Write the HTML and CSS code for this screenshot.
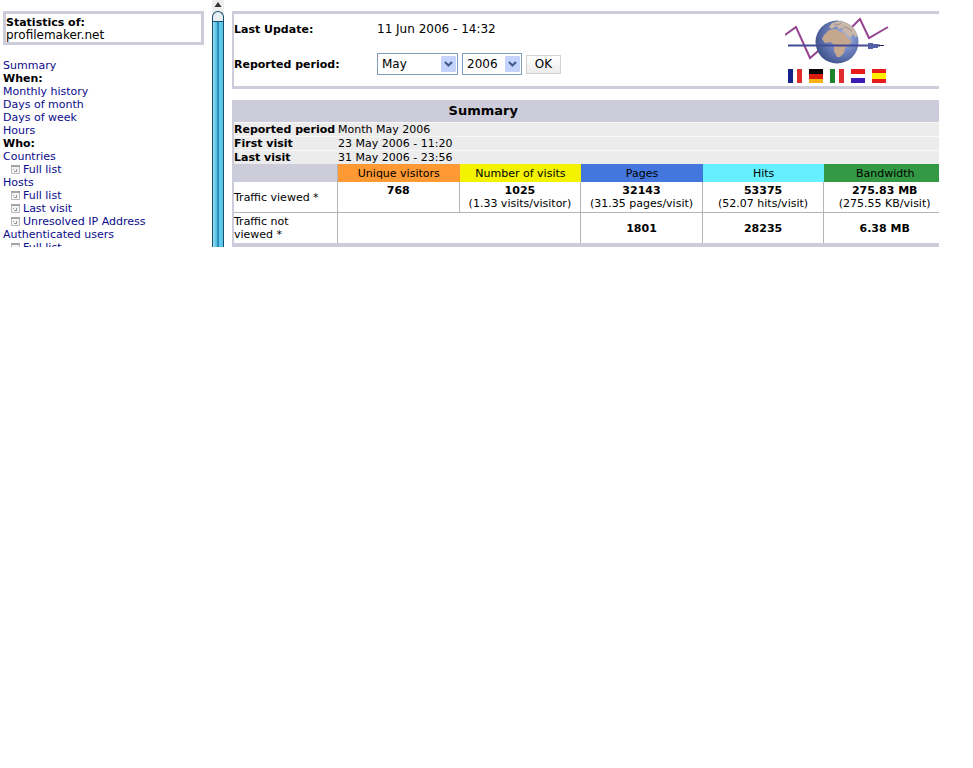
FILE: index.html
```html
<!doctype html>
<html lang="en">
  <head>
    <meta charset="UTF-8" />
    <meta name="viewport" content="width=device-width, initial-scale=1.0" />
    <title>Statistics of profilemaker.net</title>
    <link rel="stylesheet" href="styles.css">
  </head>
  <body>
    <svg class="defs" width="0" height="0" aria-hidden="true">
      <symbol id="page-icon" viewBox="0 0 9 9">
        <path d="M.5 1.500h8v7h-8z" fill="#f4f4f4" stroke="#bbb" />
        <path d="M0 1h9" stroke="#a5a5a5" stroke-width="2" />
        <path d="M2 4.500h1M3 6.500h3M5.500 4v3" fill="none" stroke="#999" />
      </symbol>
      <symbol id="arrow" viewBox="0 0 15 16">
        <rect width="15" height="16" rx="1" fill="#c3d3fb" />
        <path d="M4 6l3.500 3.500L11 6" fill="none" stroke="#435f91" stroke-width="2.200" />
      </symbol>
    </svg>

    <div class="frames">
      <nav class="sidebar">
        <div class="site-box">
          <b>Statistics of:</b>
          <span class="site-name">profilemaker.net</span>
        </div>
        <ul class="menu">
          <li><a href="#summary">Summary</a></li>
          <li><b>When:</b></li>
          <li><a href="#month">Monthly history</a></li>
          <li><a href="#daysofmonth">Days of month</a></li>
          <li><a href="#daysofweek">Days of week</a></li>
          <li><a href="#hours">Hours</a></li>
          <li><b>Who:</b></li>
          <li><a href="#countries">Countries</a></li>
          <li class="sub"><svg><use href="#page-icon" /></svg><a href="#allcountries">Full list</a></li>
          <li><a href="#hosts">Hosts</a></li>
          <li class="sub"><svg><use href="#page-icon" /></svg><a href="#allhosts">Full list</a></li>
          <li class="sub"><svg><use href="#page-icon" /></svg><a href="#lasthosts">Last visit</a></li>
          <li class="sub"><svg><use href="#page-icon" /></svg><a href="#unknownip">Unresolved IP Address</a></li>
          <li><a href="#logins">Authenticated users</a></li>
          <li class="sub"><svg><use href="#page-icon" /></svg><a href="#alllogins">Full list</a></li>
        </ul>
      </nav>

      <div class="scrollbar">
        <svg class="scroll-up" viewBox="0 0 12 11"><path d="M6 2l3.500 5h-7z" fill="#333" /></svg>
        <div class="thumb"></div>
      </div>

      <main class="main">
        <form class="period-box">
          <div class="fields">
            <b>Last Update:</b>
            <span class="update">11 Jun 2006 - 14:32</span>
            <b>Reported period:</b>
            <div class="controls">
              <span class="select month">
                <select aria-label="Month"><option>May</option></select>
                <svg><use href="#arrow" /></svg>
              </span>
              <span class="select year">
                <select aria-label="Year"><option>2006</option></select>
                <svg><use href="#arrow" /></svg>
              </span>
              <button type="button">OK</button>
            </div>
          </div>
          <div class="brand">
            <svg class="logo" viewBox="0 0 104 48">
              <defs>
                <radialGradient id="sea" cx=".65" cy=".4" r=".65">
                  <stop offset="0" stop-color="#b4c2e4" />
                  <stop offset=".5" stop-color="#6f84c0" />
                  <stop offset="1" stop-color="#43558f" />
                </radialGradient>
                <clipPath id="globe"><circle cx="52" cy="25" r="21.500" /></clipPath>
              </defs>
              <path d="M0 18l11-8 14 31 14-12M63 14l12-12 9 19 19-11" fill="none" stroke="#95448f" stroke-width="2" />
              <circle cx="52" cy="25" r="21.500" fill="url(#sea)" />
              <g clip-path="url(#globe)">
                <path d="M39 18l5-5 7-1 4 3 5 1 3 6 4 1-3 5-4 3-1 5-4 4h-3l-3-6v-6l-3-3-6 1-3-4z" fill="#c4a78d" />
                <path d="M44 10l3-4 7-2 8 1 7 6 5 8-4 1-2-3-3 4-5-6-3-1 2-3-5 1-3-3-4 3z" fill="#c9b8a8" />
                <path d="M49 7l4 1 3-2M59 10l4 1 4 3" fill="none" stroke="#988f98" />
              </g>
              <path d="M3 28.500h92" stroke="#454c96" stroke-width="2" />
              <path d="M83 26h5v1h5v4h-5v1h-5z" fill="#5560a8" />
              <path d="M93 28.500h6" stroke="#222a60" />
            </svg>
            <div class="flags">
              <a class="flag fr" href="#fr" aria-label="French"></a>
              <a class="flag de" href="#de" aria-label="German"></a>
              <a class="flag it" href="#it" aria-label="Italian"></a>
              <a class="flag nl" href="#nl" aria-label="Dutch"></a>
              <a class="flag es" href="#es" aria-label="Spanish"></a>
            </div>
          </div>
        </form>

        <section class="summary" id="summary">
          <h2>Summary</h2>
          <table>
            <colgroup>
              <col class="label-col" />
              <col span="5" />
            </colgroup>
            <tbody class="info">
              <tr><th>Reported period</th><td colspan="5">Month May 2006</td></tr>
              <tr><th>First visit</th><td colspan="5">23 May 2006 - 11:20</td></tr>
              <tr><th>Last visit</th><td colspan="5">31 May 2006 - 23:56</td></tr>
            </tbody>
            <tbody class="traffic">
              <tr class="heads">
                <td></td>
                <th class="visitors">Unique visitors</th>
                <th class="visits">Number of visits</th>
                <th class="pages">Pages</th>
                <th class="hits">Hits</th>
                <th class="bandwidth">Bandwidth</th>
              </tr>
              <tr>
                <td class="label">Traffic viewed *</td>
                <td><b>768</b><br />&nbsp;</td>
                <td><b>1025</b><br />(1.33 visits/visitor)</td>
                <td><b>32143</b><br />(31.35 pages/visit)</td>
                <td><b>53375</b><br />(52.07 hits/visit)</td>
                <td><b>275.83 MB</b><br />(275.55 KB/visit)</td>
              </tr>
              <tr>
                <td class="label">Traffic not<br />viewed *</td>
                <td colspan="2"></td>
                <td><b>1801</b></td>
                <td><b>28235</b></td>
                <td><b>6.38 MB</b></td>
              </tr>
            </tbody>
          </table>
        </section>
      </main>
    </div>
  </body>
</html>
```

FILE: styles.css
```css
:root {
  --frame: #cdccda;
  --info: #ececec;
  --link: #0b0b8c;
  --line: #b4b4b4;
}
* {
  box-sizing: border-box;
}
body {
  margin: 0;
  background-color: white;
  color: black;
  font: 11px/13px Verdana, "DejaVu Sans", sans-serif;
}
a {
  color: var(--link);
  text-decoration: none;
}
a:hover {
  text-decoration: underline;
}
.defs {
  position: absolute;
}

/* the frames show only the top of each document */
.frames {
  display: flex;
  height: 247px;
  padding-right: 34px;
  overflow: hidden;
}

.sidebar {
  flex: 0 0 212px;
  padding: 11px 8px 0 3px;
  overflow: hidden;
}
.site-box {
  display: flex;
  flex-direction: column;
  height: 34px;
  padding-top: 2px;
  border: 3px solid var(--frame);
}
.site-name {
  font-size: 12px;
}
.menu {
  margin: 14px 0 0;
  padding: 0;
  list-style: none;
}
.menu li {
  height: 13px;
  white-space: nowrap;
}
.menu .sub {
  display: flex;
  align-items: center;
  gap: 3px;
  padding-left: 8px;
}
.sub svg {
  width: 9px;
  height: 9px;
}

.scrollbar {
  display: flex;
  flex: 0 0 12px;
  flex-direction: column;
  background-color: #eee;
}
.scroll-up {
  width: 12px;
  height: 11px;
}
.thumb {
  flex: 1;
  border: solid #17516f;
  border-width: 1px 1px 0;
  border-radius: 6px 6px 0 0;
  background: linear-gradient(#e8eef2 9px, #17516f 9px, #17516f 10px, transparent 10px),
    linear-gradient(90deg, #9adcf2, #55bfe3 35%, #2989b4 48%, #2989b4 58%, #62cbed 65%, #58c2e6);
}

.main {
  flex: 1;
  min-width: 0;
  padding: 11px 0 0 8px;
  overflow: hidden;
}
.period-box,
.summary {
  width: calc(100% + 9px);
}
.period-box {
  display: flex;
  justify-content: space-between;
  height: 78px;
  margin-bottom: 11px;
  border: 3px solid var(--frame);
  border-left-width: 2px;
}
.fields {
  display: grid;
  grid-template-columns: 143px auto;
  grid-template-rows: 30px 40px;
  align-items: center;
}
.update {
  font-size: 12px;
}
.controls {
  display: flex;
  align-items: center;
  gap: 4px;
}
.select {
  position: relative;
}
.select svg {
  position: absolute;
  top: 3px;
  right: 2px;
  width: 15px;
  height: 16px;
  pointer-events: none;
}
select {
  display: block;
  width: 100%;
  height: 22px;
  padding: 0 0 0 4px;
  border: 1px solid #7f9db9;
  border-radius: 0;
  background-color: white;
  color: black;
  font: 12px Verdana, "DejaVu Sans", sans-serif;
  appearance: none;
}
.month {
  width: 81px;
}
.year {
  width: 60px;
}
button {
  width: 35px;
  height: 19px;
  padding: 0;
  border: 1px solid #d2d2d2;
  background: linear-gradient(white, #ececec);
  color: black;
  font: 12px Verdana, "DejaVu Sans", sans-serif;
}

.brand {
  display: flex;
  flex-direction: column;
  align-items: center;
  gap: 4px;
  margin-right: 56px;
  padding-top: 3px;
}
.logo {
  width: 104px;
  height: 48px;
}
.flags {
  display: flex;
  gap: 7px;
}
.flag {
  width: 14px;
  height: 14px;
}
.fr {
  background: linear-gradient(90deg, #16218c 36%, white 36% 64%, #e02c2c 64%);
}
.de {
  background: linear-gradient(#0c0505 36%, #dc1c12 36% 68%, #f8b414 68%);
}
.it {
  background: linear-gradient(90deg, #1c842c 36%, white 36% 64%, #e02c2c 64%);
}
.nl {
  background: linear-gradient(#e81c1c 36%, white 36% 64%, #3c1cb4 64%);
}
.es {
  background: linear-gradient(#e81c1c 29%, #fcf000 29% 71%, #e81c1c 71%);
}

.summary {
  border: 2px solid var(--frame);
  border-width: 0 2px 4px;
}
.summary h2 {
  margin: 0;
  padding-right: 30%;
  background-color: var(--frame);
  font-size: 13px;
  line-height: 22px;
  text-align: center;
}
.summary table {
  width: 100%;
  table-layout: fixed;
  border-spacing: 0;
}
.label-col {
  width: 104px;
}
.summary th,
.summary td {
  padding: 0;
  white-space: nowrap;
}
.info th,
.info td {
  height: 14px;
  border-top: 1px solid #f8f8f8;
  background-color: var(--info);
  text-align: left;
}
.traffic td {
  height: 31px;
  border: solid var(--line);
  border-width: 0 1px 1px 0;
  text-align: center;
}
.traffic tr:last-child td {
  height: 30px;
  border-bottom: 0;
}
.traffic .label {
  text-align: left;
}
.traffic .heads th,
.traffic .heads td {
  height: 18px;
  border-bottom: 0;
  font-weight: normal;
}
.heads td {
  background-color: var(--frame);
}
.visitors {
  background-color: #ff9933;
}
.visits {
  background-color: #f3f300;
}
.pages {
  background-color: #4477dd;
}
.hits {
  background-color: #66f0ff;
}
.bandwidth {
  background-color: #339944;
}
```
